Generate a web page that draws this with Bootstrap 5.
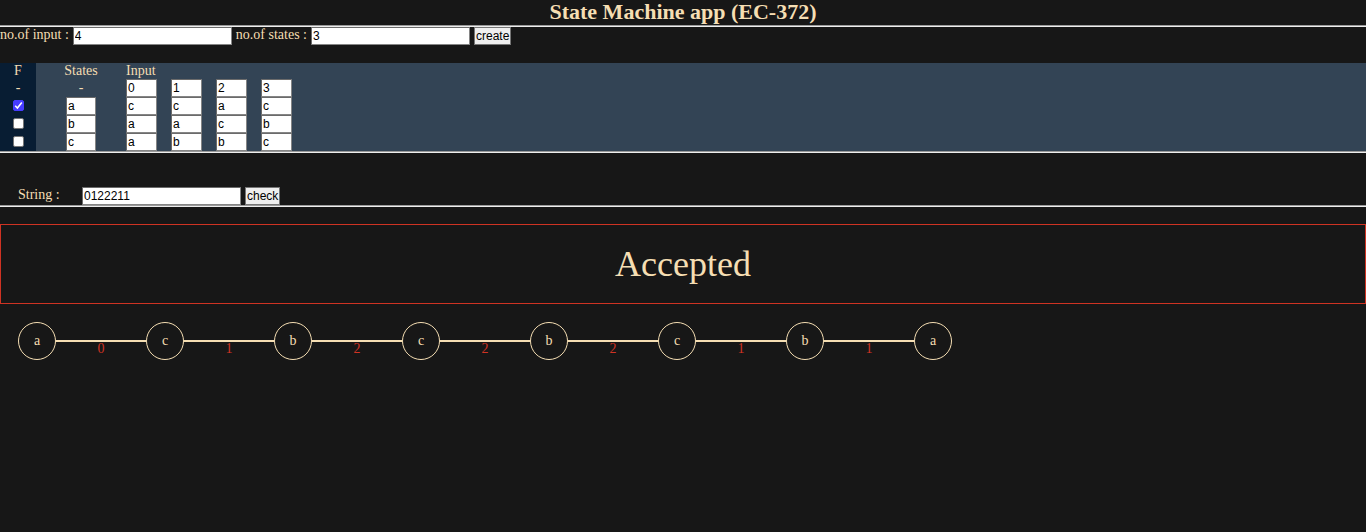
<!DOCTYPE html>
<html lang="en">
<head>
<meta charset="utf-8">
<meta name="viewport" content="width=device-width, initial-scale=1">
<title>State Machine app (EC-372)</title>
<link href="https://cdn.jsdelivr.net/npm/bootstrap@5.3.0/dist/css/bootstrap.min.css" rel="stylesheet">
<style>
  :root { --ink: #f5deb3; --page: #171717; --panel: #334455; --final: #081d33; --alert: #cf3323; }
  body { background: var(--page); color: var(--ink); font: 14px/18px "Liberation Serif", serif; }
  h1 { font-size: 22px; line-height: 24px; padding-bottom: 1px; }
  .rule { height: 2px; border-top: 1px solid #9a9a9a; border-bottom: 1px solid #eee; opacity: 1; }
  .form-line { line-height: 16px; }
  .field { height: 18px; padding: 1px; border: 1px solid; border-color: #6b6b6b #858585 #858585 #6b6b6b; background: #fff; color: #000; font: 12px/14px "Liberation Sans", sans-serif; border-radius: 0; }
  .field-wide { width: 159px; }
  .field-cell { width: 31px; display: block; }
  .push { height: 18px; padding: 0 1px; border: 1px solid #767676; background: #efefef; color: #000; font: 12px/16px "Liberation Sans", sans-serif; border-radius: 0; }
  .machine { background: var(--panel); border-collapse: collapse; width: 100%; margin-top: 18px; }
  .machine th, .machine td { padding: 0; height: 18px; font-weight: normal; vertical-align: top; }
  .machine thead tr:first-child th { height: 16px; line-height: 16px; }
  .col-final { width: 36px; background: var(--final); text-align: center; }
  .col-state { width: 90px; text-align: center; }
  .col-state .field { margin: 0 auto; width: 30px; }
  .col-in { width: 45px; }
  .tick { appearance: none; display: block; width: 11px; height: 11px; margin: 3px auto 0; border: 1px solid #767676; border-radius: 2px; background: #fff; }
  .tick:checked { border-color: #473cff; background: #473cff url("data:image/svg+xml,%3Csvg xmlns='http://www.w3.org/2000/svg' viewBox='0 0 9 9'%3E%3Cpath d='M1.2 4.8 3.4 7 7.8 1.6' fill='none' stroke='white' stroke-width='1.6'/%3E%3C/svg%3E") center / 9px no-repeat; }
  .string-row { padding-left: 18px; margin-top: 34px; }
  .string-label { width: 64px; }
  .verdict { border: 1px solid var(--alert); margin-top: 17px; padding: 18px 0; font-size: 36px; line-height: 42px; }
  .path { padding: 18px; }
  .node { width: 38px; height: 38px; border: 1px solid var(--ink); }
  .edge { width: 90px; height: 20px; margin-top: 18px; border-top: 2px solid var(--ink); color: var(--alert); line-height: 14px; }
</style>
</head>
<body>
<h1 class="text-center fw-bold mb-0">State Machine app (EC-372)</h1>
<hr class="rule m-0">
<form class="form-line d-flex gap-1" onsubmit="return false">
  <label for="inputs">no.of input :</label>
  <input id="inputs" class="field field-wide" type="text" value="4">
  <label for="states">no.of states :</label>
  <input id="states" class="field field-wide" type="text" value="3">
  <button class="push">create</button>
</form>
<main>
  <table class="machine">
    <thead>
      <tr><th class="col-final">F</th><th class="col-state">States</th><th class="col-in" colspan="4">Input</th><th></th></tr>
      <tr><th class="col-final">-</th><th class="col-state">-</th>
        <td class="col-in"><input class="field field-cell" aria-label="Symbol 1" value="0"></td><td class="col-in"><input class="field field-cell" aria-label="Symbol 2" value="1"></td><td class="col-in"><input class="field field-cell" aria-label="Symbol 3" value="2"></td><td class="col-in"><input class="field field-cell" aria-label="Symbol 4" value="3"></td><td></td></tr>
    </thead>
    <tbody>
      <tr><td class="col-final"><input class="tick" type="checkbox" aria-label="a is final" checked></td><td class="col-state"><input class="field field-cell" aria-label="State 1" value="a"></td>
        <td><input class="field field-cell" aria-label="a on 0" value="c"></td><td><input class="field field-cell" aria-label="a on 1" value="c"></td><td><input class="field field-cell" aria-label="a on 2" value="a"></td><td><input class="field field-cell" aria-label="a on 3" value="c"></td><td></td></tr>
      <tr><td class="col-final"><input class="tick" type="checkbox" aria-label="b is final"></td><td class="col-state"><input class="field field-cell" aria-label="State 2" value="b"></td>
        <td><input class="field field-cell" aria-label="b on 0" value="a"></td><td><input class="field field-cell" aria-label="b on 1" value="a"></td><td><input class="field field-cell" aria-label="b on 2" value="c"></td><td><input class="field field-cell" aria-label="b on 3" value="b"></td><td></td></tr>
      <tr><td class="col-final"><input class="tick" type="checkbox" aria-label="c is final"></td><td class="col-state"><input class="field field-cell" aria-label="State 3" value="c"></td>
        <td><input class="field field-cell" aria-label="c on 0" value="a"></td><td><input class="field field-cell" aria-label="c on 1" value="b"></td><td><input class="field field-cell" aria-label="c on 2" value="b"></td><td><input class="field field-cell" aria-label="c on 3" value="c"></td><td></td></tr>
    </tbody>
  </table>
  <hr class="rule m-0">
  <form class="string-row form-line d-flex" onsubmit="return false">
    <label class="string-label" for="word">String :</label>
    <input id="word" class="field field-wide me-1" type="text" value="0122211">
    <button class="push">check</button>
  </form>
  <hr class="rule m-0">
  <div class="verdict text-center">Accepted</div>
  <div class="path d-flex flex-wrap align-items-start">
    <div class="node rounded-circle d-flex align-items-center justify-content-center">a</div>
    <div class="edge text-center">0</div>
    <div class="node rounded-circle d-flex align-items-center justify-content-center">c</div>
    <div class="edge text-center">1</div>
    <div class="node rounded-circle d-flex align-items-center justify-content-center">b</div>
    <div class="edge text-center">2</div>
    <div class="node rounded-circle d-flex align-items-center justify-content-center">c</div>
    <div class="edge text-center">2</div>
    <div class="node rounded-circle d-flex align-items-center justify-content-center">b</div>
    <div class="edge text-center">2</div>
    <div class="node rounded-circle d-flex align-items-center justify-content-center">c</div>
    <div class="edge text-center">1</div>
    <div class="node rounded-circle d-flex align-items-center justify-content-center">b</div>
    <div class="edge text-center">1</div>
    <div class="node rounded-circle d-flex align-items-center justify-content-center">a</div>
  </div>
</main>
<script src="https://cdn.jsdelivr.net/npm/bootstrap@5.3.0/dist/js/bootstrap.bundle.min.js"></script>
</body>
</html>
